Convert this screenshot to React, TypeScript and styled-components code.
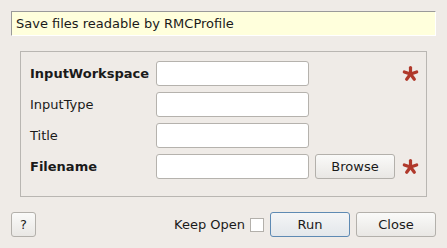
import React from "react";
import styled, { createGlobalStyle } from "styled-components";

const Global = createGlobalStyle`
  html, body { margin: 0; padding: 0; background: #efebe7; }
  body { font-family: "DejaVu Sans", "Liberation Sans", sans-serif; font-size: 13px; color: #1a1a1a; }
  * { box-sizing: border-box; }
`;

const Dialog = styled.div`
  width: 447px;
  height: 248px;
  padding: 11px 11px 0 11px;
  display: flex;
  flex-direction: column;
`;

const Description = styled.div`
  height: 25px;
  background: #ffffdc;
  border-top: 1px solid #9a9a9a;
  border-left: 1px solid #9a9a9a;
  border-right: 1px solid #ffffff;
  border-bottom: 1px solid #ffffff;
  padding: 0 0 0 4px;
  display: flex;
  align-items: center;
`;

const Group = styled.div`
  margin: 15px 9px 0 9px;
  height: 146px;
  border: 1px solid #b9b6b2;
  padding: 9px 0 0 9px;
  display: grid;
  grid-template-columns: 126px 153px 86px 30px;
  grid-auto-rows: 25px;
  column-gap: 0;
  row-gap: 6px;
  align-items: center;
`;

const Label = styled.div<{ $bold?: boolean }>`
  font-weight: ${(p) => (p.$bold ? "bold" : "normal")};
  grid-column: 1;
`;

const Input = styled.div`
  grid-column: 2;
  height: 25px;
  width: 153px;
  background: #ffffff;
  border: 1px solid #b5b2ad;
  border-radius: 3px;
`;

const Button = styled.button<{ $primary?: boolean; $w?: number }>`
  height: 25px;
  width: ${(p) => p.$w ?? 80}px;
  font-family: "DejaVu Sans", "Liberation Sans", sans-serif;
  font-size: 13px;
  color: #1a1a1a;
  padding: 0;
  border-radius: 3px;
  border: 1px solid ${(p) => (p.$primary ? "#5e8ab3" : "#b3b0ab")};
  background: ${(p) =>
    p.$primary
      ? "linear-gradient(#f4f5f6, #e3e7eb)"
      : "linear-gradient(#fafaf9, #e9e7e4)"};
`;

const BrowseCell = styled.div`
  grid-column: 3;
  display: flex;
  justify-content: flex-end;
`;

const StarCell = styled.div`
  grid-column: 4;
  display: flex;
  justify-content: center;
  align-items: center;
`;

const Footer = styled.div`
  margin-top: 15px;
  display: flex;
  align-items: center;
`;

const Spacer = styled.div`
  flex: 1;
`;

const KeepOpen = styled.label`
  display: flex;
  align-items: center;
  margin-right: 6px;
`;

const Check = styled.span`
  display: inline-block;
  width: 14px;
  height: 14px;
  margin-left: 5px;
  background: #ffffff;
  border: 1px solid #b3b0ab;
`;

const Gap = styled.div<{ $w: number }>`
  width: ${(p) => p.$w}px;
`;

const Star = () => (
  <svg width="17" height="17" viewBox="0 0 17 17">
    <g stroke="#b0392b" strokeWidth="3.2" strokeLinecap="round">
      {[0, 72, 144, 216, 288].map((a) => {
        const r = (a * Math.PI) / 180;
        const x = 8.5 + Math.sin(r) * 6.5;
        const y = 9 - Math.cos(r) * 6.5;
        return <line key={a} x1="8.5" y1="9" x2={x} y2={y} />;
      })}
    </g>
  </svg>
);

export default function App() {
  return (
    <>
      <Global />
      <Dialog>
        <Description>Save files readable by RMCProfile</Description>
        <Group>
          <Label $bold>InputWorkspace</Label>
          <Input />
          <div />
          <StarCell>
            <Star />
          </StarCell>
          <Label>InputType</Label>
          <Input />
          <div />
          <div />
          <Label>Title</Label>
          <Input />
          <div />
          <div />
          <Label $bold>Filename</Label>
          <Input />
          <BrowseCell>
            <Button>Browse</Button>
          </BrowseCell>
          <StarCell>
            <Star />
          </StarCell>
        </Group>
        <Footer>
          <Button $w={25}>?</Button>
          <Spacer />
          <KeepOpen>
            Keep Open
            <Check />
          </KeepOpen>
          <Button $primary>Run</Button>
          <Gap $w={6} />
          <Button>Close</Button>
        </Footer>
      </Dialog>
    </>
  );
}
